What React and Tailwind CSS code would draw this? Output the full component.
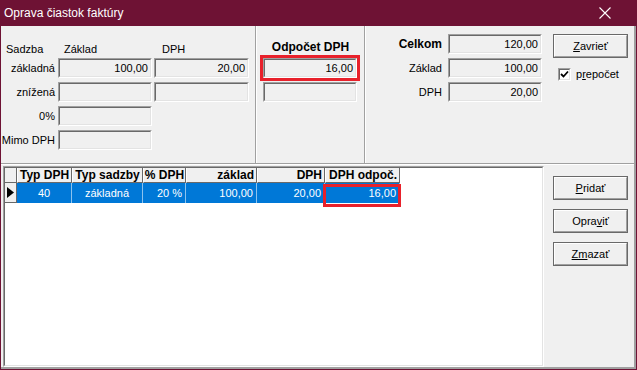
import React from "react";

function Field({ value, className = "" }) {
  return (
    <div className={`h-[20px] border border-t-[#a0a0a0] border-l-[#a0a0a0] border-r-white border-b-white ${className}`}>
      <div className="h-full border border-t-[#696969] border-l-[#696969] border-r-[#e3e3e3] border-b-[#e3e3e3] bg-[#f0f0f0] flex items-center justify-end pr-[2px] text-[11px]">
        {value}
      </div>
    </div>
  );
}

function Btn({ children }) {
  return (
    <div className="w-[75px] h-[24px] border border-[#696969] bg-[#f0f0f0]">
      <div className="h-full border border-t-white border-l-white border-r-[#a0a0a0] border-b-[#a0a0a0] flex items-center justify-center text-[11px]">
        {children}
      </div>
    </div>
  );
}

const cols = [
  { w: "w-[55px]", head: "Typ DPH", val: "40", hAlign: "justify-center", vAlign: "justify-center" },
  { w: "w-[71px]", head: "Typ sadzby", val: "základná", hAlign: "justify-center", vAlign: "justify-center" },
  { w: "w-[43px]", head: "% DPH", val: "20 %", hAlign: "justify-center", vAlign: "justify-end" },
  { w: "w-[71px]", head: "základ", val: "100,00", hAlign: "justify-end", vAlign: "justify-end" },
  { w: "w-[68px]", head: "DPH", val: "20,00", hAlign: "justify-end", vAlign: "justify-end" },
  { w: "w-[75px]", head: "DPH odpoč.", val: "16,00", hAlign: "justify-end", vAlign: "justify-end", mark: true },
];

export default function App() {
  return (
    <div className="w-[637px] h-[370px] bg-[#6e1234] flex flex-col font-['Liberation_Sans',Arial,sans-serif] text-black">
      {/* Title bar */}
      <div className="h-[26px] flex items-center justify-between pl-[4px] pr-[26px] text-white text-[12px]">
        <span>Oprava čiastok faktúry</span>
        <svg width="12" height="12" viewBox="0 0 12 12">
          <path d="M0.5 0.5 L11.5 11.5 M11.5 0.5 L0.5 11.5" stroke="white" strokeWidth="1.1" />
        </svg>
      </div>

      {/* Body */}
      <div className="flex-1 mx-[1px] mb-[1px] bg-[#f0f0f0] border-r-2 border-b-2 border-[#a0a0a0] flex flex-col">
        {/* Top panel */}
        <div className="h-[138px] flex border-b border-[#a0a0a0]">
          {/* Sadzby */}
          <div className="w-[255px] border-r border-[#a0a0a0] pt-[16px] text-[11px]">
            <div className="h-[14px] flex items-center">
              <div className="w-[57px] pl-[5px]">Sadzba</div>
              <div className="w-[96px] pl-[6px]">Základ</div>
              <div className="pl-[8px]">DPH</div>
            </div>
            <div className="mt-[2px] flex flex-col gap-[4px]">
              <div className="flex items-center">
                <div className="w-[57px] text-right pr-[3px]">základná</div>
                <Field value="100,00" className="w-[94px]" />
                <Field value="20,00" className="w-[95px] ml-[2px]" />
              </div>
              <div className="flex items-center">
                <div className="w-[57px] text-right pr-[3px]">znížená</div>
                <Field value="" className="w-[94px]" />
                <Field value="" className="w-[95px] ml-[2px]" />
              </div>
              <div className="flex items-center">
                <div className="w-[57px] text-right pr-[3px]">0%</div>
                <Field value="" className="w-[94px]" />
              </div>
              <div className="flex items-center">
                <div className="w-[57px] text-right pr-[3px]">Mimo DPH</div>
                <Field value="" className="w-[94px]" />
              </div>
            </div>
          </div>

          {/* Odpocet */}
          <div className="w-[109px] border-l border-l-white border-r border-r-[#a0a0a0] pt-[14px]">
            <div className="h-[15px] text-center font-bold text-[12px] leading-[15px]">Odpočet DPH</div>
            <div className="mt-[3px] ml-[6px] w-[94px] flex flex-col gap-[4px]">
              <Field value="16,00" className="w-[94px] outline-3 outline-solid outline-[#e8212b]" />
              <Field value="" className="w-[94px]" />
            </div>
          </div>

          {/* Celkom */}
          <div className="flex-1 border-l border-white pt-[8px] flex text-[11px]">
            <div className="flex flex-col gap-[4px]">
              <div className="flex items-center">
                <div className="w-[82px] pr-[6px] text-right font-bold text-[12px]">Celkom</div>
                <Field value="120,00" className="w-[94px]" />
              </div>
              <div className="flex items-center">
                <div className="w-[82px] pr-[6px] text-right">Základ</div>
                <Field value="100,00" className="w-[94px]" />
              </div>
              <div className="flex items-center">
                <div className="w-[82px] pr-[6px] text-right">DPH</div>
                <Field value="20,00" className="w-[94px]" />
              </div>
            </div>
            <div className="ml-[11px] flex flex-col">
              <Btn>
                <span><span className="underline">Z</span>avrieť</span>
              </Btn>
              <div className="mt-[8px] pl-[5px] flex items-center gap-[5px]">
                <div className="w-[13px] h-[13px] border border-t-[#a0a0a0] border-l-[#a0a0a0] border-r-white border-b-white">
                  <div className="w-full h-full border border-t-[#696969] border-l-[#696969] border-r-[#e3e3e3] border-b-[#e3e3e3] bg-white flex items-center justify-center">
                    <svg width="9" height="9" viewBox="0 0 9 9">
                      <path d="M1 4 L3.5 6.5 L8 1.5" stroke="black" strokeWidth="1.8" fill="none" />
                    </svg>
                  </div>
                </div>
                <span>p<span className="underline">r</span>epočet</span>
              </div>
            </div>
          </div>
        </div>

        {/* Bottom panel */}
        <div className="flex-1 flex border-t border-white">
          <div className="ml-[2px] mt-[1px] w-[541px] border border-t-[#a0a0a0] border-l-[#a0a0a0] border-r-white border-b-white">
            <div className="h-full border border-t-[#696969] border-l-[#696969] border-r-[#e3e3e3] border-b-[#e3e3e3] bg-white">
              {/* Header */}
              <div className="h-[15px] flex font-bold text-[12px]">
                <div className="w-[12px] bg-[#f0f0f0] border-r border-b border-[#696969]" />
                {cols.map((c) => (
                  <div
                    key={c.head}
                    className={`${c.w} bg-[#f0f0f0] border-l border-l-white border-r border-r-[#696969] border-b border-b-[#696969] flex items-center ${c.hAlign} px-[2px] leading-none whitespace-nowrap`}
                  >
                    {c.head}
                  </div>
                ))}
              </div>
              {/* Row */}
              <div className="h-[20px] flex text-[11px]">
                <div className="w-[12px] bg-[#f0f0f0] border-r border-b border-[#696969] flex items-center justify-center">
                  <svg width="7" height="11" viewBox="0 0 7 11">
                    <path d="M0 0 L7 5.5 L0 11 Z" fill="black" />
                  </svg>
                </div>
                {cols.map((c) => (
                  <div
                    key={c.head}
                    className={`${c.w} relative bg-[#0078d7] text-white border-r border-[#8cc2ee] flex items-center ${c.vAlign} px-[3px]`}
                  >
                    {c.val}
                    {c.mark && (
                      <div className="absolute top-[1px] left-[-2px] w-[78px] h-[23px] border-3 border-[#e8212b]" />
                    )}
                  </div>
                ))}
              </div>
            </div>
          </div>

          <div className="flex-1 pl-[9px] pt-[11px] flex flex-col gap-[9px]">
            <Btn>
              <span><span className="underline">P</span>ridať</span>
            </Btn>
            <Btn>
              <span>Opra<span className="underline">v</span>iť</span>
            </Btn>
            <Btn>
              <span><span className="underline">Zm</span>azať</span>
            </Btn>
          </div>
        </div>
      </div>
    </div>
  );
}
